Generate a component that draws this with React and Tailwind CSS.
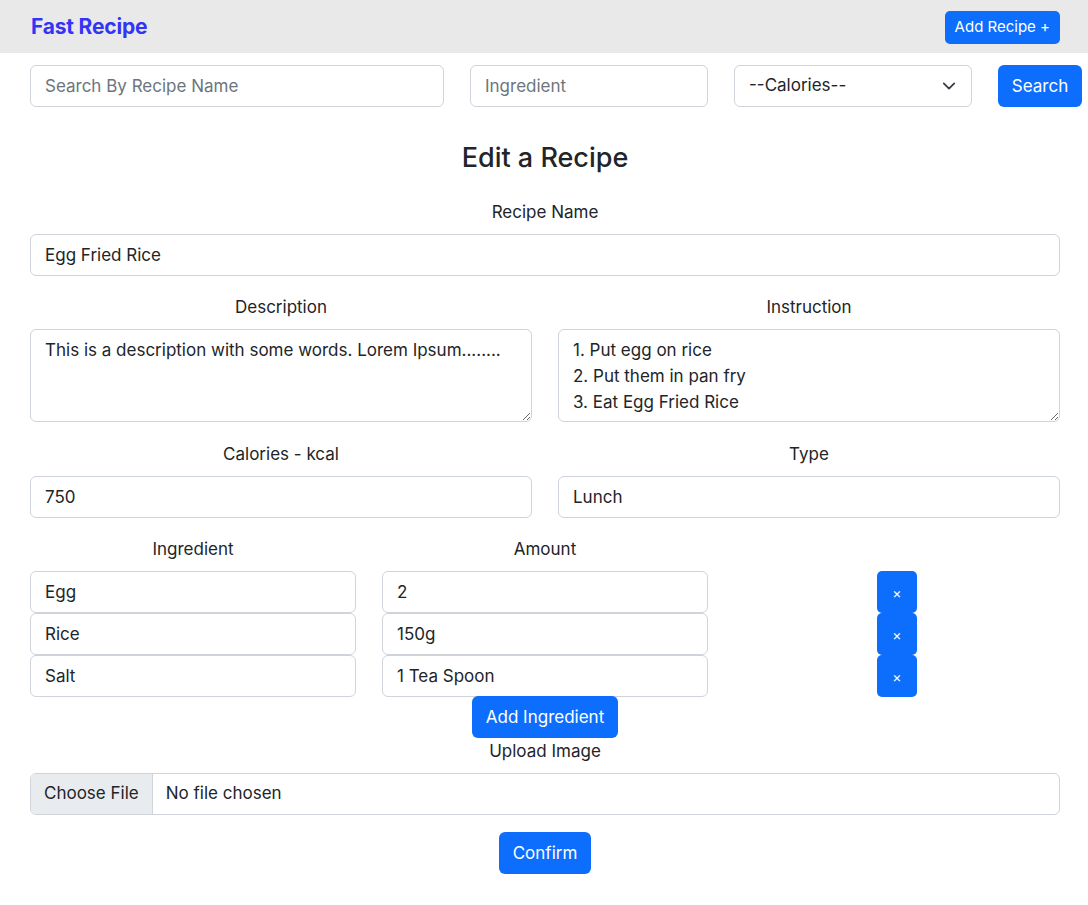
import React from 'react';

const inputCls =
  'block w-full h-[42px] px-[14px] border border-[#ced4da] rounded-[6px] bg-white text-[17px] text-[#212529] outline-none placeholder:text-[#6c757d]';
const labelCls = 'block text-center text-[17px] leading-[26px] text-[#212529]';
const btnCls =
  'bg-[#0d6efd] text-white rounded-[6px] text-[17px] leading-[26px] flex items-center justify-center';

const ingredients = [
  { name: 'Egg', amount: '2' },
  { name: 'Rice', amount: '150g' },
  { name: 'Salt', amount: '1 Tea Spoon' },
];

const App = () => {
  return (
    <div className="min-h-[905px] bg-white text-[#212529]" style={{ fontFamily: 'Inter, "Liberation Sans", sans-serif' }}>
      {/* Navbar */}
      <nav className="h-[53px] bg-[#e9e9e9] flex items-center justify-between pl-[31px] pr-[28px]">
        <span className="text-[21px] font-bold text-[#3434f6] tracking-[-0.2px]">Fast Recipe</span>
        <button className="h-[33px] px-[10px] bg-[#0d6efd] text-white text-[15px] rounded-[5px] mt-[1px]">Add Recipe +</button>
      </nav>

      {/* Search bar */}
      <div className="flex gap-[26px] pl-[30px] mt-[12px]">
        <input className={`${inputCls} !w-[414px]`} placeholder="Search By Recipe Name" />
        <input className={`${inputCls} !w-[238px]`} placeholder="Ingredient" />
        <div className="relative w-[238px] shrink-0">
          <select className={`${inputCls} appearance-none`} defaultValue="">
            <option value="">--Calories--</option>
          </select>
          <svg className="absolute right-[16px] top-[14px] pointer-events-none" width="14" height="14" viewBox="0 0 16 16" fill="none" stroke="#343a40" strokeWidth="2" strokeLinecap="round" strokeLinejoin="round">
            <path d="m2 5 6 6 6-6" />
          </svg>
        </div>
        <button className={`${btnCls} w-[84px] h-[42px] shrink-0`}>Search</button>
      </div>

      {/* Form */}
      <div className="ml-[30px] w-[1030px]">
        <h3 className="text-center text-[27px] leading-[36px] font-medium mt-[33px]">Edit a Recipe</h3>

        <label className={`${labelCls} mt-[23px]`}>Recipe Name</label>
        <input className={`${inputCls} mt-[9px]`} defaultValue="Egg Fried Rice" />

        <div className="grid grid-cols-2 gap-x-[26px] mt-[18px]">
          <div>
            <label className={labelCls}>Description</label>
            <textarea
              className="block w-full h-[93px] mt-[9px] px-[14px] py-[7px] border border-[#ced4da] rounded-[6px] text-[17px] leading-[26px] outline-none"
              defaultValue="This is a description with some words. Lorem Ipsum........"
            />
          </div>
          <div>
            <label className={labelCls}>Instruction</label>
            <textarea
              className="block w-full h-[93px] mt-[9px] px-[14px] py-[7px] border border-[#ced4da] rounded-[6px] text-[17px] leading-[26px] outline-none"
              defaultValue={'1. Put egg on rice\n2. Put them in pan fry\n3. Eat Egg Fried Rice'}
            />
          </div>
        </div>

        <div className="grid grid-cols-2 gap-x-[26px] mt-[19px]">
          <div>
            <label className={labelCls}>Calories - kcal</label>
            <input className={`${inputCls} mt-[9px]`} defaultValue="750" />
          </div>
          <div>
            <label className={labelCls}>Type</label>
            <input className={`${inputCls} mt-[9px]`} defaultValue="Lunch" />
          </div>
        </div>

        {/* Ingredients */}
        <div className="grid grid-cols-3 gap-x-[26px] mt-[18px]">
          <label className={labelCls}>Ingredient</label>
          <label className={labelCls}>Amount</label>
          <div />
        </div>
        <div className="mt-[9px]">
          {ingredients.map((ing) => (
            <div key={ing.name} className="grid grid-cols-3 gap-x-[26px]">
              <input className={inputCls} defaultValue={ing.name} />
              <input className={inputCls} defaultValue={ing.amount} />
              <div className="flex justify-center">
                <button className="w-[40px] h-[42px] bg-[#0d6efd] text-white rounded-[5px] text-[14px] flex items-center justify-center">×</button>
              </div>
            </div>
          ))}
        </div>
        <div className="flex justify-center -mt-[1px]">
          <button className={`${btnCls} h-[42px] w-[146px]`}>Add Ingredient</button>
        </div>

        <label className={labelCls}>Upload Image</label>
        <div className="mt-[9px] h-[42px] flex items-center border border-[#ced4da] rounded-[6px] overflow-hidden text-[17px]">
          <span className="h-full flex items-center px-[13px] bg-[#e9ecef] border-r border-[#ced4da]">Choose File</span>
          <span className="pl-[13px]">No file chosen</span>
        </div>

        <div className="flex justify-center mt-[17px]">
          <button className={`${btnCls} h-[42px] w-[92px]`}>Confirm</button>
        </div>
      </div>
    </div>
  );
};

export default App;
